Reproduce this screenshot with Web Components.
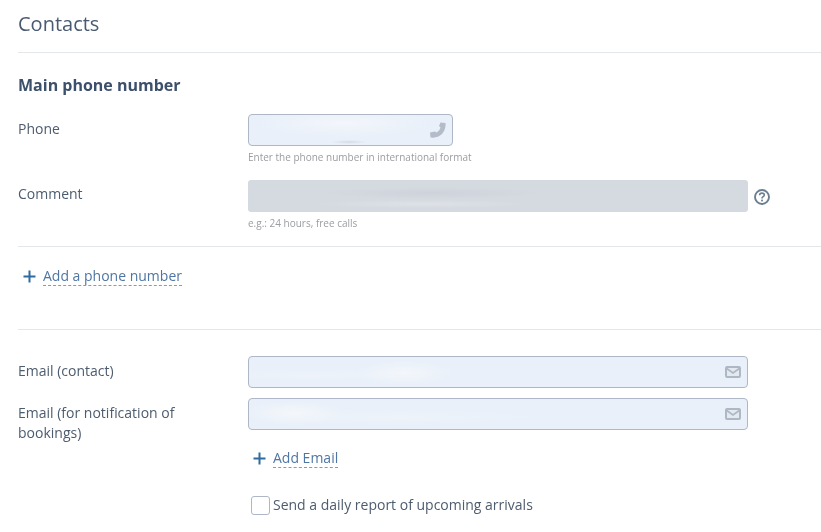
<!DOCTYPE html>
<html><head><meta charset="utf-8"><style>
html,body{margin:0;background:#fff}
body{font:14px/20px "Open Sans",sans-serif;color:#4d5c6f;width:821px;height:532px;overflow:hidden}
</style></head><body>
<contacts-page></contacts-page>
<template id="tf">
<style>
:host{display:block;flex:none}
.box{box-sizing:border-box;height:32px;border:1px solid #aeb7c6;border-radius:4px;background:#e9f0f9;position:relative;overflow:hidden;display:flex;align-items:center;justify-content:flex-end;padding-right:6px}
:host([disabled]) .box{border:0;background:#d5dae1;border-radius:3px}
.blur{position:absolute;inset:0;pointer-events:none}
.hint{font-size:10px;line-height:14px;color:#9a9da2;margin-top:4px;white-space:nowrap}
.hint:empty{display:none}
</style>
<div class="box"><div class="blur"></div><slot></slot></div><div class="hint"></div>
</template>
<script>
const tf=document.getElementById('tf');
class CField extends HTMLElement{
 constructor(){super();const s=this.attachShadow({mode:'open'});s.append(tf.content.cloneNode(true));}
 connectedCallback(){const s=this.shadowRoot;s.querySelector('.hint').textContent=this.getAttribute('hint')||'';s.querySelector('.blur').style.background=this.getAttribute('blur')||'none';this.style.width=this.getAttribute('w')+'px';}
}
class CRow extends HTMLElement{
 constructor(){super();this.attachShadow({mode:'open'}).innerHTML=`<style>
 :host{display:grid;grid-template-columns:230px 1fr;align-items:start}
 .l{line-height:20px;width:190px;padding-top:var(--lt,5px)}
 .c{display:flex;align-items:flex-start;gap:6px}
 </style><div class="l"><slot name="label"></slot></div><div class="c"><slot></slot></div>`;}
}
class CRule extends HTMLElement{
 constructor(){super();this.attachShadow({mode:'open'}).innerHTML=`<style>:host{display:block;height:1px;background:#e4e7ea}</style>`;}
}
class CAdd extends HTMLElement{
 constructor(){super();this.attachShadow({mode:'open'}).innerHTML=`<style>
 :host{display:inline-flex;align-items:center;gap:7px;color:#4f76a3;font-size:14px;line-height:20px}
 svg{display:block;flex:none;margin-top:1px}
 span{display:block;border-bottom:1px dashed #7f9cbd;line-height:19px}
 </style><svg width="13" height="13" viewBox="0 0 13 13"><path d="M6.5 .5v12M.5 6.5h12" stroke="#2f6b9f" stroke-width="2" fill="none"/></svg><span><slot></slot></span>`;}
}
class CCheck extends HTMLElement{
 constructor(){super();this.attachShadow({mode:'open'}).innerHTML=`<style>
 :host{display:flex;align-items:center;gap:3px;line-height:20px}
 i{display:block;box-sizing:border-box;width:19px;height:19px;border:1px solid #aeb7c6;border-radius:3px;background:#fff;flex:none}
 </style><i></i><slot></slot>`;}
}
class ContactsPage extends HTMLElement{
 constructor(){super();this.attachShadow({mode:'open'}).innerHTML=`<style>
 :host{display:block;padding-left:18px;will-change:opacity}
 h1{font-size:20px;font-weight:400;line-height:28px;margin:0;padding-top:10px;height:42px;color:#4a5a70}
 h2{font-size:16px;font-weight:700;line-height:22px;margin:0;color:#3c4f6b;padding-top:21px;height:40px}
 .add1{padding:19px 0 0 5px;height:63px}
 .add2{padding:5px 0 0 5px;margin-left:230px}
 .check{padding:25px 0 0 3px;margin-left:230px}
 .phone,.cm{height:66px}
 .cm{--lt:4px}
 .ml{margin-top:10px}
 .help{margin-top:9px;flex:none}
 </style>
 <h1>Contacts</h1><c-rule></c-rule>
 <h2>Main phone number</h2>
 <c-row class="phone"><span slot="label">Phone</span>
  <c-field w="205" hint="Enter the phone number in international format" blur="radial-gradient(ellipse 18px 2px at 100px 27px,#d5dbe4,transparent),radial-gradient(ellipse 90px 14px at 95px 8px,#f3f6fb,transparent)">
   <svg style="position:relative;display:block" width="16" height="16" viewBox="0 0 16 16"><path d="M10.500 .5 15.500 1C16 6 14 11 10 13.500 7.500 15.200 4 16 .5 15.500L0 10.500 5 9.500 6.500 10.500C8.500 9.500 10 7.500 10.500 5.500L9 4Z" fill="#b3bcc8"/></svg>
  </c-field>
 </c-row>
 <c-row class="cm"><span slot="label">Comment</span>
  <c-field disabled w="500" hint="e.g.: 24 hours, free calls" blur="radial-gradient(ellipse 110px 6px at 185px 13px,#ced3db,transparent),radial-gradient(ellipse 105px 4px at 175px 24px,#dee2e7,transparent)"></c-field>
  <svg class="help" width="16" height="16" viewBox="0 0 16 16"><circle cx="8" cy="8" r="7" fill="none" stroke="#6b7f93" stroke-width="1.900"/><path d="M5.600 6.300c0-1.300 1.100-2.200 2.400-2.200s2.300.8 2.300 2c0 1.700-2.300 1.500-2.300 3.300" fill="none" stroke="#6b7f93" stroke-width="1.600"/><rect x="7.100" y="10.600" width="1.800" height="1.800" fill="#6b7f93"/></svg>
 </c-row>
 <c-rule></c-rule>
 <div class="add1"><c-add>Add a phone number</c-add></div>
 <c-rule></c-rule>
 <c-row style="margin-top:26px"><span slot="label">Email (contact)</span>
  <c-field w="500" blur="radial-gradient(ellipse 50px 13px at 155px 16px,#f3f6fb,transparent),radial-gradient(ellipse 100px 6px at 60px 18px,#eef3f9,transparent)">
   <svg style="position:relative;display:block" width="16" height="12" viewBox="0 0 16 12"><rect x="1" y="1" width="14" height="10" rx="1" fill="#e4e9f0" stroke="#aeb8c5" stroke-width="2"/><path d="M1 2l7 5 7-5" fill="none" stroke="#aeb8c5" stroke-width="1.700"/></svg>
  </c-field>
 </c-row>
 <c-row class="ml"><span slot="label">Email (for notification of bookings)</span>
  <c-field w="500" blur="radial-gradient(ellipse 50px 12px at 45px 14px,#f4f7fb,transparent),radial-gradient(ellipse 140px 8px at 150px 18px,#eef3f9,transparent)">
   <svg style="position:relative;display:block" width="16" height="12" viewBox="0 0 16 12"><rect x="1" y="1" width="14" height="10" rx="1" fill="#e4e9f0" stroke="#aeb8c5" stroke-width="2"/><path d="M1 2l7 5 7-5" fill="none" stroke="#aeb8c5" stroke-width="1.700"/></svg>
  </c-field>
 </c-row>
 <div class="add2"><c-add>Add Email</c-add></div>
 <div class="check"><c-check>Send a daily report of upcoming arrivals</c-check></div>`;}
}
customElements.define('c-field',CField);
customElements.define('c-row',CRow);
customElements.define('c-rule',CRule);
customElements.define('c-add',CAdd);
customElements.define('c-check',CCheck);
customElements.define('contacts-page',ContactsPage);
</script>
</body></html>
